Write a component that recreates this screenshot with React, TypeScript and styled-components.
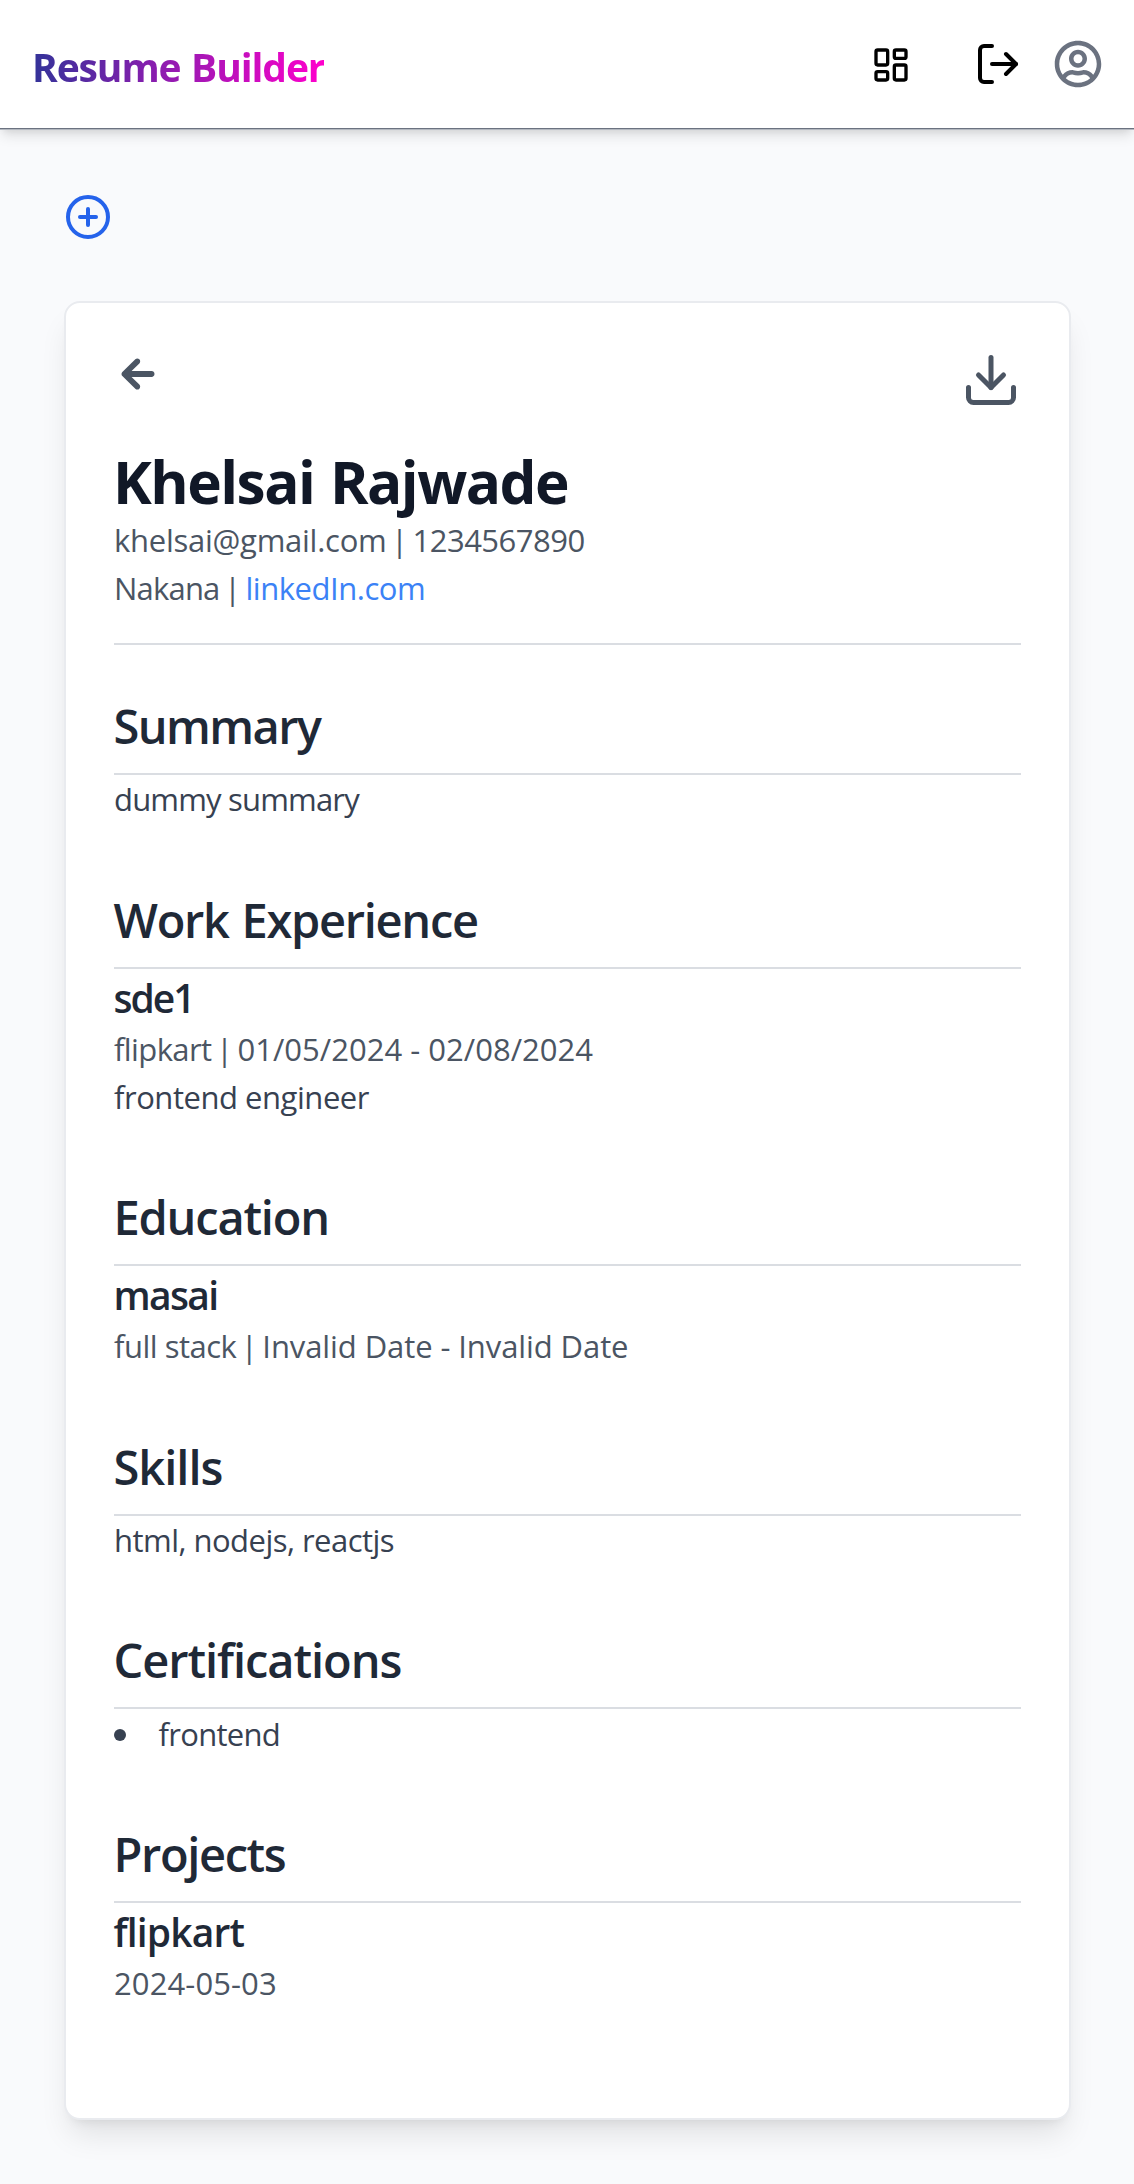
import React from "react";
import styled, { createGlobalStyle } from "styled-components";
import { CirclePlus, Download, LayoutDashboard, LogOut } from "lucide-react";
import { FaRegUserCircle } from "react-icons/fa";
import { IoMdArrowRoundBack } from "react-icons/io";

const GlobalStyle = createGlobalStyle`
  *, *::before, *::after { box-sizing: border-box; }
  body {
    margin: 0;
    background: #f9fafc;
    font-family: "Open Sans", "Noto Sans", sans-serif;
  }
  h1, h2, h3, p, ul { margin: 0; padding: 0; }
  svg { display: block; }
`;

const Page = styled.div`
  min-height: 2184px;
  background: #f9fafc;
`;

const Header = styled.header`
  display: flex;
  align-items: center;
  justify-content: space-between;
  height: 129px;
  padding: 0 32px;
  background: #fff;
  border-bottom: 1px solid #6b7280;
  box-shadow: 0 1px 0 #b3b8c0, 0 9px 12px -2px rgba(0, 0, 0, 0.1),
    0 5px 8px -4px rgba(0, 0, 0, 0.1);
`;

const Brand = styled.div`
  padding-top: 6px;
  font-size: 39px;
  line-height: 56px;
  font-weight: 700;
  letter-spacing: -1.1px;
  word-spacing: 1.5px;
  white-space: nowrap;
  color: transparent;
  background: linear-gradient(to right, #333399, #ff00cc);
  -webkit-background-clip: text;
  background-clip: text;
`;

const Nav = styled.nav`
  display: flex;
  align-items: center;
  gap: 32px;
`;

const IconButton = styled.button<{ $color?: string }>`
  display: flex;
  padding: 0;
  border: 0;
  background: none;
  cursor: pointer;
  color: ${(p) => p.$color ?? "#000"};
`;

const DashboardButton = styled(IconButton)`
  padding-top: 1.5px;
  margin-right: 31.5px;
`;

const Main = styled.main`
  display: flex;
  flex-direction: column;
  align-items: stretch;
  padding: 64px 63px 64px 64px;
  gap: 60px;
`;

const Card = styled.article`
  height: 1819px;
  padding: 47px 48px 48px;
  background: #fff;
  border: 2px solid #e9ebef;
  border-radius: 16px;
  box-shadow: 0 20px 30px -6px rgba(0, 0, 0, 0.1),
    0 8px 12px -8px rgba(0, 0, 0, 0.1);
`;

const Actions = styled.div`
  display: flex;
  align-items: flex-start;
  justify-content: space-between;
  height: 61px;
  margin-bottom: 34px;
`;

const Name = styled.h1`
  height: 71px;
  margin-left: -1px;
  font-size: 58.5px;
  line-height: 73px;
  font-weight: 700;
  letter-spacing: -1.53px;
  word-spacing: 2px;
  color: #111827;
`;

const Line = styled.p<{ $tracking?: number; $strong?: boolean }>`
  font-size: 31px;
  line-height: 48px;
  letter-spacing: ${(p) => p.$tracking ?? 0}px;
  color: ${(p) => (p.$strong ? "#374151" : "#4b5563")};
  white-space: pre;
`;

const Run = styled.span<{ $tracking: number }>`
  letter-spacing: ${(p) => p.$tracking}px;
`;

const Bar = styled.span`
  margin: 0 -3.6px;
`;

const Link = styled.a`
  letter-spacing: -0.47px;
  color: #3b82f6;
  text-decoration: none;
`;

const Divider = styled.hr`
  height: 2px;
  margin: 31px 0 48.7px;
  border: 0;
  background: #dadde2;
`;

const SectionBox = styled.section`
  & + & {
    margin-top: 64px;
  }
`;

const SectionTitle = styled.h2<{ $tracking: number }>`
  padding: 0.7px 0 14.8px;
  border-bottom: 2px solid #dadde2;
  font-size: 47px;
  line-height: 64px;
  font-weight: 600;
  letter-spacing: ${(p) => p.$tracking}px;
  word-spacing: 2px;
  text-indent: -0.5px;
  color: #1f2937;
`;

const ItemTitle = styled.h3<{ $tracking: number }>`
  height: 56px;
  font-size: 39px;
  line-height: 58px;
  font-weight: 600;
  letter-spacing: ${(p) => p.$tracking}px;
  text-indent: -0.5px;
  color: #1f2937;
`;

const BulletList = styled.ul`
  list-style: none;
`;

const BulletItem = styled.li`
  display: flex;
  align-items: center;
  height: 48px;
  padding-top: 1px;

  &::before {
    content: "";
    width: 12px;
    height: 12px;
    margin: 2px 33px 0 -0.5px;
    border-radius: 50%;
    background: #374151;
  }
`;

type SectionProps = {
  title: string;
  tracking: number;
  children: React.ReactNode;
};

function Section({ title, tracking, children }: SectionProps) {
  return (
    <SectionBox>
      <SectionTitle $tracking={tracking}>{title}</SectionTitle>
      {children}
    </SectionBox>
  );
}

type BarLineProps = {
  left: string;
  leftTracking: number;
  right: React.ReactNode;
  rightTracking: number;
};

function BarLine({ left, leftTracking, right, rightTracking }: BarLineProps) {
  return (
    <Line>
      <Run $tracking={leftTracking}>{left}</Run> <Bar>|</Bar>{" "}
      <Run $tracking={rightTracking}>{right}</Run>
    </Line>
  );
}

export default function App() {
  return (
    <Page>
      <GlobalStyle />
      <Header>
        <Brand>Resume Builder</Brand>
        <Nav>
          <DashboardButton aria-label="Dashboard">
            <LayoutDashboard size={40} />
          </DashboardButton>
          <IconButton aria-label="Log out">
            <LogOut size={48} />
          </IconButton>
          <IconButton aria-label="Profile" $color="#6b7280">
            <FaRegUserCircle size={48} />
          </IconButton>
        </Nav>
      </Header>
      <Main>
        <IconButton aria-label="New resume" $color="#2563eb">
          <CirclePlus size={48} />
        </IconButton>
        <Card>
          <Actions>
            <IconButton aria-label="Back" $color="#4b5563">
              <IoMdArrowRoundBack size={48} />
            </IconButton>
            <IconButton aria-label="Download" $color="#4b5563">
              <Download size={60} />
            </IconButton>
          </Actions>
          <Name>Khelsai Rajwade</Name>
          <BarLine
            left="khelsai@gmail.com"
            leftTracking={-0.26}
            right="1234567890"
            rightTracking={-0.5}
          />
          <BarLine
            left="Nakana"
            leftTracking={-0.8}
            right={<Link>linkedIn.com</Link>}
            rightTracking={-0.47}
          />
          <Divider />
          <Section title="Summary" tracking={-1.6}>
            <Line $strong $tracking={-0.82}>dummy summary</Line>
          </Section>
          <Section title="Work Experience" tracking={-1.3}>
            <ItemTitle $tracking={-2}>sde1</ItemTitle>
            <BarLine
              left="flipkart"
              leftTracking={-0.6}
              right="01/05/2024 - 02/08/2024"
              rightTracking={0.02}
            />
            <Line $strong $tracking={-0.46}>frontend engineer</Line>
          </Section>
          <Section title="Education" tracking={-1.2}>
            <ItemTitle $tracking={-1.7}>masai</ItemTitle>
            <BarLine
              left="full stack"
              leftTracking={-0.5}
              right="Invalid Date - Invalid Date"
              rightTracking={-0.09}
            />
          </Section>
          <Section title="Skills" tracking={-1}>
            <Line $strong $tracking={-0.53}>html, nodejs, reactjs</Line>
          </Section>
          <Section title="Certifications" tracking={-1.06}>
            <BulletList>
              <BulletItem>
                <Line $strong $tracking={-0.7}>frontend</Line>
              </BulletItem>
            </BulletList>
          </Section>
          <Section title="Projects" tracking={-1.38}>
            <ItemTitle $tracking={-0.85}>flipkart</ItemTitle>
            <Line $tracking={0.1}>2024-05-03</Line>
          </Section>
        </Card>
      </Main>
    </Page>
  );
}
